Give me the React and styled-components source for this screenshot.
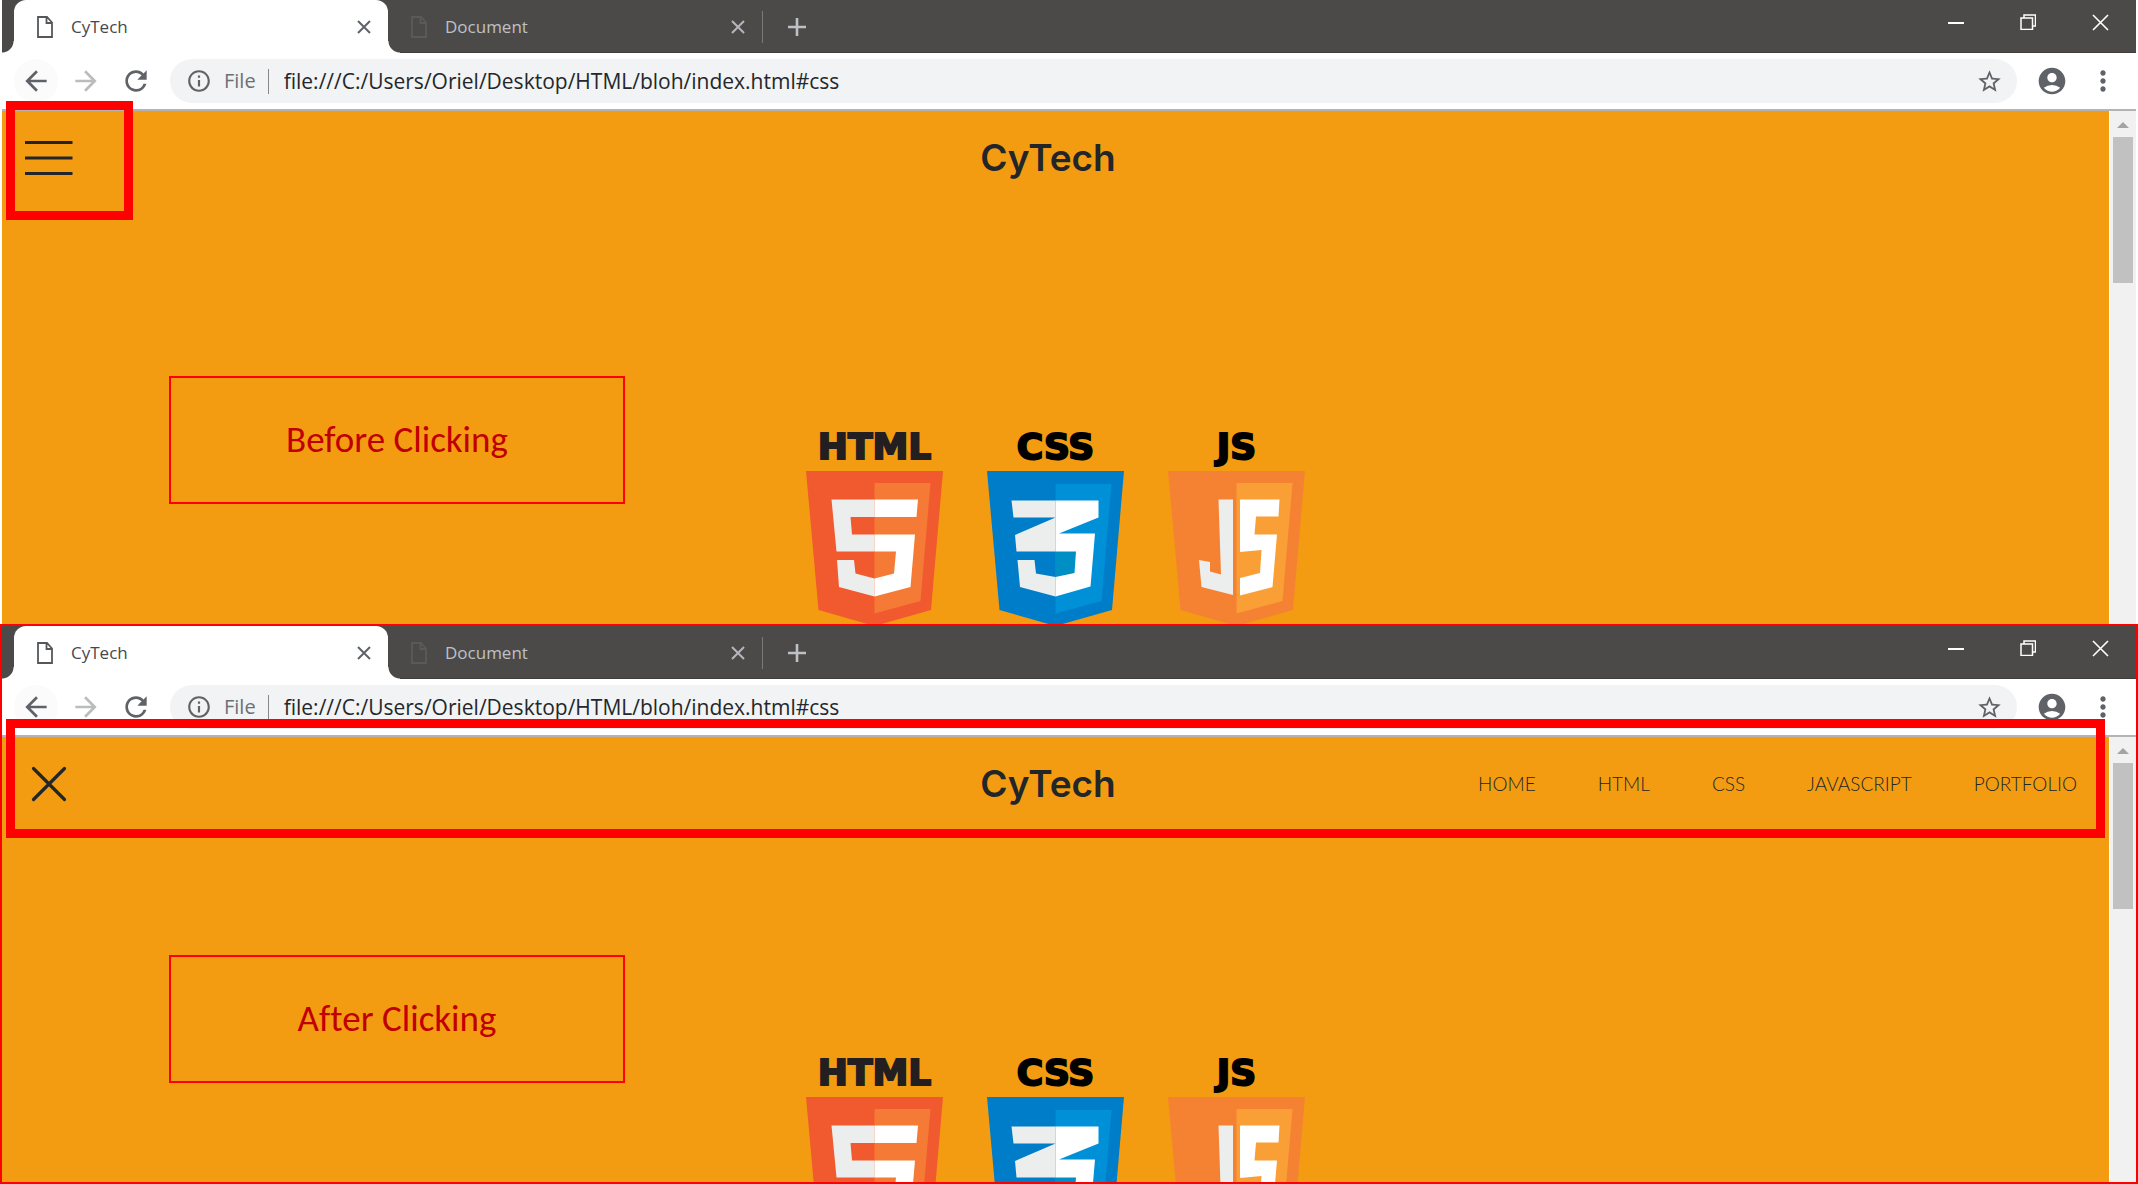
import React from "react";
import styled, { createGlobalStyle, css } from "styled-components";
import {
  MdArrowBack,
  MdArrowForward,
  MdRefresh,
  MdInfoOutline,
  MdStarBorder,
  MdAccountCircle,
  MdMoreVert,
} from "react-icons/md";

const color = {
  strip: "#4c4a48",
  page: "#f39c12",
  ink: "#222629",
  mark: "#ff0000",
  icon: "#5f6368",
};

const GlobalStyle = createGlobalStyle`
  *, *::before, *::after { box-sizing: border-box; }
  body { margin: 0; background: #fff; }
  button {
    margin: 0; padding: 0; border: 0; background: none; color: inherit;
    font: inherit; display: flex; align-items: center; justify-content: center;
  }
  svg { display: block; flex: none; }
`;

const Comparison = styled.main`
  display: grid;
  grid-template-rows: 624fr 560fr;
  height: 100vh;
  overflow: hidden;
`;

const BrowserWindow = styled.section`
  position: relative;
  display: flex;
  flex-direction: column;
  min-height: 0;
  overflow: hidden;
  border: solid ${(p) => (p.$framed ? color.mark : "#fff")};
  border-width: ${(p) => (p.$framed ? "2px" : "0 2px")};
  background: #fff;
  font-family: "Open Sans", "Noto Sans", sans-serif;
`;

const TabStrip = styled.div`
  display: flex;
  flex: none;
  height: 53px;
  padding-left: 12px;
  background: ${color.strip};
  border-bottom: 1px solid #403e3c;
`;

const flare = css`
  content: "";
  position: absolute;
  bottom: 0;
  width: 12px;
  height: 12px;
`;

const Tab = styled.div`
  position: relative;
  display: flex;
  align-items: center;
  width: 374px;
  height: 53px;
  padding: 0 15px 0 23px;
  color: #bdc1c6;
  ${(p) =>
    p.$active &&
    css`
      color: #45494d;
      background: #fff;
      border-radius: 12px 12px 0 0;
      &::before {
        ${flare}
        left: -12px;
        background: radial-gradient(circle at 0 0, transparent 11px, #fff 12px);
      }
      &::after {
        ${flare}
        right: -12px;
        background: radial-gradient(circle at 100% 0, transparent 11px, #fff 12px);
      }
    `}
`;

const TabTitle = styled.button`
  && {
    flex: 1;
    justify-content: flex-start;
    gap: 18px;
    font-size: 17px;
    line-height: 24px;
  }
`;

const SmallButton = styled.button`
  && {
    width: 18px;
    height: 24px;
    color: ${(p) => (p.$dim ? "#b4b7bb" : color.icon)};
  }
`;

const TabDivider = styled.span`
  width: 1px;
  height: 32px;
  margin-top: 11px;
  background: #7b7a78;
`;

const NewTabButton = styled.button`
  && {
    width: 24px;
    height: 53px;
    margin-left: 22px;
    color: #bdc1c6;
  }
`;

const WindowControls = styled.div`
  display: flex;
  height: 44px;
  margin-left: auto;
  color: #fff;
`;

const ControlButton = styled.button`
  width: 72px;
`;

const Toolbar = styled.div`
  display: flex;
  flex: none;
  align-items: center;
  height: 58px;
  padding: 0 8px 0 12px;
  border-bottom: 2px solid #b6b4b2;
  color: ${color.icon};
`;

const NavButton = styled.button`
  && {
    width: 44px;
    height: 44px;
    margin-right: 6px;
    border-radius: 50%;
    color: ${(p) => (p.$muted ? "#babcbe" : color.icon)};
    background: ${(p) => (p.$hover ? "#fbfbfb" : "none")};
  }
`;

const AddressBar = styled.form`
  display: flex;
  flex: 1;
  align-items: center;
  height: 44px;
  margin-left: 6px;
  padding: 0 19px 0 16px;
  border-radius: 22px;
  background: #f1f3f4;
  font-size: 20px;
`;

const SchemeLabel = styled.label`
  margin: 0 12px;
  line-height: 28px;
  color: #6c7075;
`;

const SchemeDivider = styled.span`
  width: 1px;
  height: 25px;
  margin-right: 15px;
  background: #85888c;
`;

const AddressInput = styled.input`
  flex: 1;
  min-width: 0;
  padding: 0;
  border: 0;
  outline: 0;
  background: none;
  color: #24272b;
  font-family: inherit;
  font-size: 21px;
  line-height: 28px;
`;

const ToolbarActions = styled.div`
  display: flex;
  margin-left: 9px;
`;

const ActionButton = styled.button`
  width: 51px;
  height: 44px;
`;

const Viewport = styled.div`
  display: flex;
  flex: 1;
  min-height: 0;
  overflow: hidden;
  background: ${color.page};
`;

const Page = styled.div`
  flex: 1;
  min-width: 0;
  font-family: Lato, sans-serif;
  color: ${color.ink};
`;

const PageHeader = styled.header`
  display: grid;
  grid-template-columns: 1fr auto 1fr;
  align-items: center;
  height: 94px;
  padding: 0 32px 0 17px;
`;

const MenuButton = styled.button`
  width: 60px;
  height: 60px;
`;

const SiteTitle = styled.h1`
  margin: 0;
  font-family: Inter, sans-serif;
  font-size: 37px;
  font-weight: 600;
  line-height: 48px;
`;

const SiteNav = styled.nav`
  display: flex;
  justify-content: flex-end;
  gap: 62px;
`;

const SiteLink = styled.a`
  color: ${color.ink};
  font-size: 19px;
  font-weight: 300;
  line-height: 24px;
  text-decoration: none;
`;

const LogoRow = styled.div`
  display: flex;
  justify-content: center;
  gap: 44px;
  padding-top: 220px;
`;

const Logo = styled.figure`
  display: flex;
  flex-direction: column;
  align-items: center;
  gap: 2px;
  width: 137px;
  margin: 0;
`;

const LogoName = styled.figcaption`
  color: ${(p) => p.$tone};
  font-family: "DejaVu Sans", sans-serif;
  font-size: 36px;
  font-weight: 700;
  line-height: 44px;
  -webkit-text-stroke: 2px ${(p) => p.$tone};
`;

const ScrollTrack = styled.div`
  display: flex;
  flex: none;
  flex-direction: column;
  align-items: center;
  gap: 9px;
  width: 27px;
  padding: 11px 2px 0 1px;
  border-left: 1px solid #fff;
  background: #f1f1f1;
  color: #a3a3a3;
`;

const ScrollThumb = styled.div`
  width: 20px;
  height: 146px;
  background: #c1c1c1;
`;

/* Annotations lie over the captured windows. */
const Highlight = styled.div`
  position: absolute;
  top: ${(p) => p.$top}px;
  left: 4px;
  ${(p) => (p.$wide ? "right: 31px;" : "width: 127px;")}
  height: 119px;
  border: 9px solid ${color.mark};
  pointer-events: none;
`;

const Callout = styled.p`
  position: absolute;
  top: ${(p) => p.$top}px;
  left: 167px;
  display: flex;
  align-items: center;
  justify-content: center;
  width: 456px;
  height: 128px;
  margin: 0;
  border: 2px solid ${color.mark};
  color: #c00000;
  font-family: Carlito, Lato, sans-serif;
  font-size: 37px;
  line-height: 44px;
  font-variant-ligatures: none;
`;

const FileIcon = ({ stroke }) => (
  <svg width="16" height="22" viewBox="0 0 16 22" fill="none" stroke={stroke} strokeWidth="1.8" aria-hidden="true">
    <path d="M1 1H10L15 6.5V21H1ZM9.5 1V7H15" />
  </svg>
);

const CrossIcon = ({ size, width }) => (
  <svg width={size} height={size} viewBox={`0 0 ${size} ${size}`} stroke="currentColor" strokeWidth={width} aria-hidden="true">
    <path d={`M1 1L${size - 1} ${size - 1}M${size - 1} 1L1 ${size - 1}`} />
  </svg>
);

const MenuIcon = ({ open }) =>
  open ? (
    <svg width="36" height="36" viewBox="0 0 36 36" stroke={color.ink} strokeWidth="3.2" strokeLinecap="round" aria-hidden="true">
      <path d="M2.500 2.500L33.500 33.500M33.500 2.500L2.500 33.500" />
    </svg>
  ) : (
    <svg width="48" height="36" viewBox="0 0 48 36" stroke={color.ink} strokeWidth="3.2" aria-hidden="true">
      <path d="M0 2.500H47.500M0 18H47.500M0 33.500H47.500" />
    </svg>
  );

const Shield = ({ base, light, lightTop = 12, children }) => (
  <svg width="137" height="156" viewBox="0 0 137 156" aria-hidden="true">
    <path d="M0 0H137L125 139L68.500 155L12.500 139Z" fill={base} />
    <path d={`M68.500 ${lightTop}H124.500L114.500 130L68.500 142.500Z`} fill={light} />
    {children}
  </svg>
);

const HtmlShield = () => (
  <Shield base="#f1592f" light="#f47a35">
    <path fill="#ebeeed" d="M25.500 28.500H68.500V46H44.500L46 63.500H68.500V80.500H30.500ZM31 89H48L49.500 102.500L68.500 107.500V125.500L33 116Z" />
    <path fill="#fff" d="M68.500 28.500H112L110.500 46H68.500ZM68.500 63.500H109L104.500 116L68.500 125.500V107.500L88 102.500L90 80.500H68.500Z" />
  </Shield>
);

const CssShield = () => (
  <Shield base="#007dc8" light="#0090d8" lightTop={13}>
    <path fill="#008fc4" d="M68.500 80.500H89L87.500 102L68.500 106Z" />
    <path fill="#ebeeed" d="M24.500 29.500H68.500V46.500H26.500ZM28 64L68.500 46.500V80.500H29.500ZM30.500 89H47.500L49 102.500L68.500 106V125.500L33 116Z" />
    <path fill="#fff" d="M68.500 29.500H111.500V46.500L72 62.500H108L103.500 115.500L68.500 125.500V106L87.500 102L89 80.500H68.500Z" />
  </Shield>
);

const JsShield = () => (
  <Shield base="#f58233" light="#fa9e36">
    <path fill="#ebeeed" d="M50.500 28.500H65V124L33.500 116L31 89L42 91V100.500L53 103.500Z" />
    <path fill="#fff" d="M72 28.500H111.500L110.500 45.500H88L86.500 63.500H109L104.500 116L72 124.500V107L92 102L93.500 79L72 81Z" />
  </Shield>
);

const logos = [
  { name: "HTML", tone: "#231f20", Mark: HtmlShield },
  { name: "CSS", tone: "#000", Mark: CssShield },
  { name: "JS", tone: "#000", Mark: JsShield },
];

const links = ["HOME", "HTML", "CSS", "JAVASCRIPT", "PORTFOLIO"];

function BrowserTab({ title, active }) {
  return (
    <Tab $active={active}>
      <TabTitle type="button">
        <FileIcon stroke={active ? "#55585b" : "#5b5a58"} />
        {title}
      </TabTitle>
      <SmallButton type="button" $dim={!active} aria-label={`Close ${title}`}>
        <CrossIcon size={14} width="2" />
      </SmallButton>
    </Tab>
  );
}

function Browser({ id, framed, open, children }) {
  return (
    <BrowserWindow $framed={framed}>
      <TabStrip>
        <BrowserTab title="CyTech" active />
        <BrowserTab title="Document" />
        <TabDivider />
        <NewTabButton type="button" aria-label="New tab">
          <svg width="20" height="20" viewBox="0 0 20 20" stroke="currentColor" strokeWidth="2.6" aria-hidden="true">
            <path d="M10 1V19M1 10H19" />
          </svg>
        </NewTabButton>
        <WindowControls>
          <ControlButton type="button" aria-label="Minimize">
            <svg width="16" height="16" viewBox="0 0 16 16" stroke="currentColor" strokeWidth="2" aria-hidden="true">
              <path d="M0 9H16" />
            </svg>
          </ControlButton>
          <ControlButton type="button" aria-label="Restore">
            <svg width="16" height="16" viewBox="0 0 16 16" fill="none" stroke="currentColor" strokeWidth="1.5" aria-hidden="true">
              <path d="M1 4H12.500V15.500H1ZM4 4V1H15.500V12H12.500" />
            </svg>
          </ControlButton>
          <ControlButton type="button" aria-label="Close">
            <CrossIcon size={17} width="1.6" />
          </ControlButton>
        </WindowControls>
      </TabStrip>
      <Toolbar>
        <NavButton type="button" aria-label="Back" $hover>
          <MdArrowBack size={32} />
        </NavButton>
        <NavButton type="button" aria-label="Forward" $muted>
          <MdArrowForward size={32} />
        </NavButton>
        <NavButton type="button" aria-label="Reload">
          <MdRefresh size={32} />
        </NavButton>
        <AddressBar>
          <MdInfoOutline size={26} />
          <SchemeLabel htmlFor={id}>File</SchemeLabel>
          <SchemeDivider />
          <AddressInput id={id} type="text" readOnly value="file:///C:/Users/Oriel/Desktop/HTML/bloh/index.html#css" />
          <SmallButton type="button" aria-label="Bookmark this page">
            <MdStarBorder size={27} />
          </SmallButton>
        </AddressBar>
        <ToolbarActions>
          <ActionButton type="button" aria-label="Profile">
            <MdAccountCircle size={32} />
          </ActionButton>
          <ActionButton type="button" aria-label="More">
            <MdMoreVert size={32} />
          </ActionButton>
        </ToolbarActions>
      </Toolbar>
      <Viewport>
        <Page>
          <PageHeader>
            <MenuButton type="button" aria-label={open ? "Close menu" : "Open menu"}>
              <MenuIcon open={open} />
            </MenuButton>
            <SiteTitle>CyTech</SiteTitle>
            {open && (
              <SiteNav>
                {links.map((text) => (
                  <SiteLink key={text} href={`#${text.toLowerCase()}`}>
                    {text}
                  </SiteLink>
                ))}
              </SiteNav>
            )}
          </PageHeader>
          <LogoRow>
            {logos.map(({ name, tone, Mark }) => (
              <Logo key={name}>
                <LogoName $tone={tone}>{name}</LogoName>
                <Mark />
              </Logo>
            ))}
          </LogoRow>
        </Page>
        <ScrollTrack>
          <svg width="12" height="6" viewBox="0 0 12 6" fill="currentColor" aria-hidden="true">
            <path d="M6 0L12 6H0Z" />
          </svg>
          <ScrollThumb />
        </ScrollTrack>
      </Viewport>
      {children}
    </BrowserWindow>
  );
}

export default function App() {
  return (
    <>
      <GlobalStyle />
      <Comparison>
        <Browser id="address-before">
          <Highlight $top={101} />
          <Callout $top={376}>Before Clicking</Callout>
        </Browser>
        <Browser id="address-after" framed open>
          <Highlight $top={93} $wide />
          <Callout $top={329}>After Clicking</Callout>
        </Browser>
      </Comparison>
    </>
  );
}
